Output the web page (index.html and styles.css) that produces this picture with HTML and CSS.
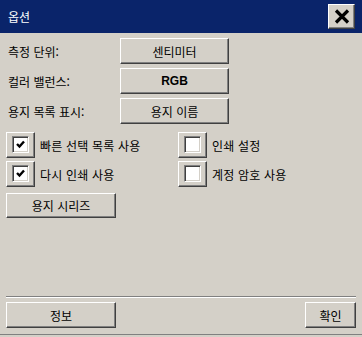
FILE: index.html
```html
<!DOCTYPE html>
<html lang="ko">
<head>
<meta charset="utf-8">
<link rel="stylesheet" href="styles.css">
</head>
<body>
<div class="window">
  <div class="titlebar">
    <span class="title">옵션</span>
    <button class="close" aria-label="닫기">
      <svg width="16" height="15" viewBox="0 0 16 15"><path d="M2 1.5 L14 13.5 M14 1.5 L2 13.5" stroke="#000" stroke-width="3.2" fill="none"/></svg>
    </button>
  </div>
  <div class="content">
    <div class="fields">
      <div class="field"><span class="label">측정 단위:</span><button class="btn wide">센티미터</button></div>
      <div class="field"><span class="label">컬러 밸런스:</span><button class="btn wide bold">RGB</button></div>
      <div class="field"><span class="label">용지 목록 표시:</span><button class="btn wide">용지 이름</button></div>
    </div>
    <div class="checks">
      <div class="check"><span class="frame"><span class="box"><svg width="9" height="9" viewBox="0 0 9 9"><path d="M1 4 L3.5 6.5 L8 1.5" stroke="#000" stroke-width="2.4" fill="none"/></svg></span></span><span class="ctext">빠른 선택 목록 사용</span></div>
      <div class="check"><span class="frame"><span class="box"></span></span><span class="ctext">인쇄 설정</span></div>
      <div class="check"><span class="frame"><span class="box"><svg width="9" height="9" viewBox="0 0 9 9"><path d="M1 4 L3.5 6.5 L8 1.5" stroke="#000" stroke-width="2.4" fill="none"/></svg></span></span><span class="ctext">다시 인쇄 사용</span></div>
      <div class="check"><span class="frame"><span class="box"></span></span><span class="ctext">계정 암호 사용</span></div>
    </div>
    <button class="btn series">용지 시리즈</button>
    <div class="spacer"></div>
    <div class="sep"></div>
    <div class="footer">
      <button class="btn info">정보</button>
      <button class="btn ok">확인</button>
    </div>
  </div>
</div>
</body>
</html>
```

FILE: styles.css
```css
* { box-sizing: border-box; }
html, body { margin: 0; padding: 0; }
body {
  background: #d4d0c8;
  font-family: "Noto Sans CJK KR", "Noto Sans", sans-serif;
  font-size: 12px;
  color: #000;
}
.window {
  width: 362px;
  height: 337px;
  display: flex;
  flex-direction: column;
  padding-bottom: 2px;
}
.titlebar {
  height: 33px;
  flex: none;
  background: #0a246a;
  color: #fff;
  display: flex;
  align-items: center;
  justify-content: space-between;
  padding: 0 7px 0 8px;
}
.title { font-size: 12px; }
.close {
  width: 27px;
  height: 25px;
  padding: 0;
  background: #d4d0c8;
  border: 1px solid;
  border-color: #fff #404040 #404040 #fff;
  box-shadow: inset -1px -1px #808080;
  display: flex;
  align-items: center;
  justify-content: center;
}
.content {
  flex: 1;
  display: flex;
  flex-direction: column;
  padding: 5px 6px 6px;
  border-bottom: 1px solid #808080;
}
.fields { display: flex; flex-direction: column; gap: 4px; }
.field { display: flex; align-items: center; height: 26px; }
.label { width: 114px; padding-left: 2px; }
.btn {
  height: 26px;
  padding: 0;
  background: #d4d0c8;
  border: 1px solid;
  border-color: #fff #404040 #404040 #fff;
  box-shadow: inset -1px -1px #808080;
  font: inherit;
  color: #000;
}
.wide { width: 109px; }
.bold { font-weight: bold; font-family: "Liberation Sans", sans-serif; }
.checks {
  margin-top: 8px;
  display: grid;
  grid-template-columns: 172px auto;
  grid-auto-rows: 26px;
  row-gap: 3px;
}
.check { display: flex; align-items: center; gap: 5px; }
.ctext { letter-spacing: 0.2px; }
.frame {
  width: 29px;
  height: 26px;
  border: 1px solid;
  border-color: #fff #404040 #404040 #fff;
  box-shadow: inset -1px -1px #808080;
  display: flex;
  align-items: center;
  justify-content: center;
  padding-bottom: 2px;
}
.box {
  width: 17px;
  height: 17px;
  background: #fff;
  border: 1px solid;
  border-color: #808080 #fff #fff #808080;
  box-shadow: inset 1px 1px #404040, inset -1px -1px #d4d0c8;
  display: flex;
  align-items: center;
  justify-content: center;
}
.series { margin-top: 6px; width: 110px; height: 25px; }
.spacer { flex: 1; }
.sep {
  border-top: 1px solid #808080;
  border-bottom: 1px solid #fff;
  margin-bottom: 4px;
}
.footer { display: flex; justify-content: space-between; }
.info { width: 110px; }
.ok { width: 51px; }
```
